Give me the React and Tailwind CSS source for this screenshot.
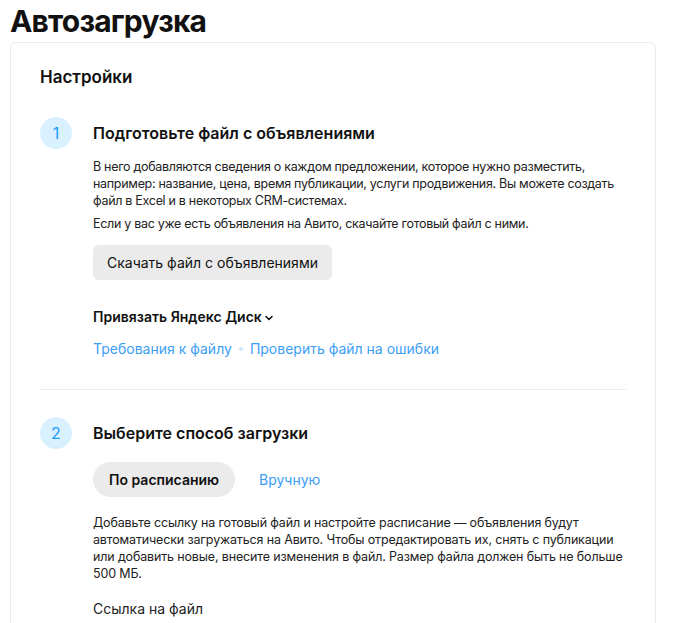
import React from 'react';

// Numbered step badge
function StepNumber({ n }) {
    return (
        <div className="w-8 h-8 rounded-full bg-[#d9f0ff] text-[#1a9bff] flex items-center justify-center text-[16px] shrink-0">
            {n}
        </div>
    );
}

function Step({ n, title, children }) {
    return (
        <div className="flex gap-[21px]">
            <StepNumber n={n} />
            <div className="flex-1 pt-[4px]">
                <h3 className="text-[16px] font-semibold leading-[24px] text-[#111]">{title}</h3>
                {children}
            </div>
        </div>
    );
}

function ChevronDown() {
    return (
        <svg width="10" height="10" viewBox="0 0 10 10" className="ml-[2px] mt-[2px]">
            <path d="M2 3.5 L5 6.5 L8 3.5" fill="none" stroke="#111" strokeWidth="1.6" strokeLinecap="round" strokeLinejoin="round" />
        </svg>
    );
}

export default function App() {
    return (
        <div className="bg-white min-h-screen pl-[10px] pr-[22px]" style={{ fontFamily: 'Inter, "Noto Sans", sans-serif' }}>
            <h1 className="text-[30px] font-bold leading-[40px] text-[#111] pt-[1px] tracking-[-0.8px]">Автозагрузка</h1>

            <div className="mt-[1px] border border-[#ececec] rounded-[6px] px-[29px] pt-[22px] pb-6">
                <h2 className="text-[17px] font-semibold leading-[24px] text-[#111]">Настройки</h2>

                <div className="mt-[28px]">
                    <Step n={1} title="Подготовьте файл с объявлениями">
                        <p className="mt-[13px] text-[12.5px] leading-[17px] text-[#222] tracking-[-0.3px]">
                            В него добавляются сведения о каждом предложении, которое нужно разместить, например: название, цена, время публикации, услуги продвижения. Вы можете создать файл в Excel и в некоторых CRM-системах.
                        </p>
                        <p className="mt-[6px] text-[12.5px] leading-[17px] text-[#222] tracking-[-0.3px]">
                            Если у вас уже есть объявления на Авито, скачайте готовый файл с ними.
                        </p>
                        <button className="mt-[13px] h-[35px] px-[14px] rounded-[6px] bg-[#ebebeb] text-[14px] text-[#111]">
                            Скачать файл с объявлениями
                        </button>
                        <div className="mt-[26px] flex items-center text-[14px] font-semibold text-[#111]">
                            Привязать Яндекс Диск
                            <ChevronDown />
                        </div>
                        <div className="mt-[11px] flex items-center text-[14px] text-[#3d9ef5]">
                            <span>Требования к файлу</span>
                            <span className="mx-[7px] w-[4px] h-[4px] rounded-full bg-[#cfe6fb]"></span>
                            <span>Проверить файл на ошибки</span>
                        </div>
                    </Step>
                </div>

                <div className="mt-[30px] border-t border-[#ececec]"></div>

                <div className="mt-[27px]">
                    <Step n={2} title="Выберите способ загрузки">
                        <div className="mt-[17px] flex items-center gap-[24px]">
                            <button className="h-[35px] px-[16px] rounded-full bg-[#ebebeb] text-[14px] font-semibold text-[#111]">
                                По расписанию
                            </button>
                            <span className="text-[14px] text-[#3d9ef5]">Вручную</span>
                        </div>
                        <p className="mt-[17px] text-[12.5px] leading-[17px] text-[#222] tracking-[-0.15px]">
                            Добавьте ссылку на готовый файл и настройте расписание — объявления будут автоматически загружаться на Авито. Чтобы отредактировать их, снять с публикации или добавить новые, внесите изменения в файл. Размер файла должен быть не больше 500 МБ.
                        </p>
                        <div className="mt-[16px] text-[14px] text-[#222]">Ссылка на файл</div>
                    </Step>
                </div>
            </div>
        </div>
    );
}
